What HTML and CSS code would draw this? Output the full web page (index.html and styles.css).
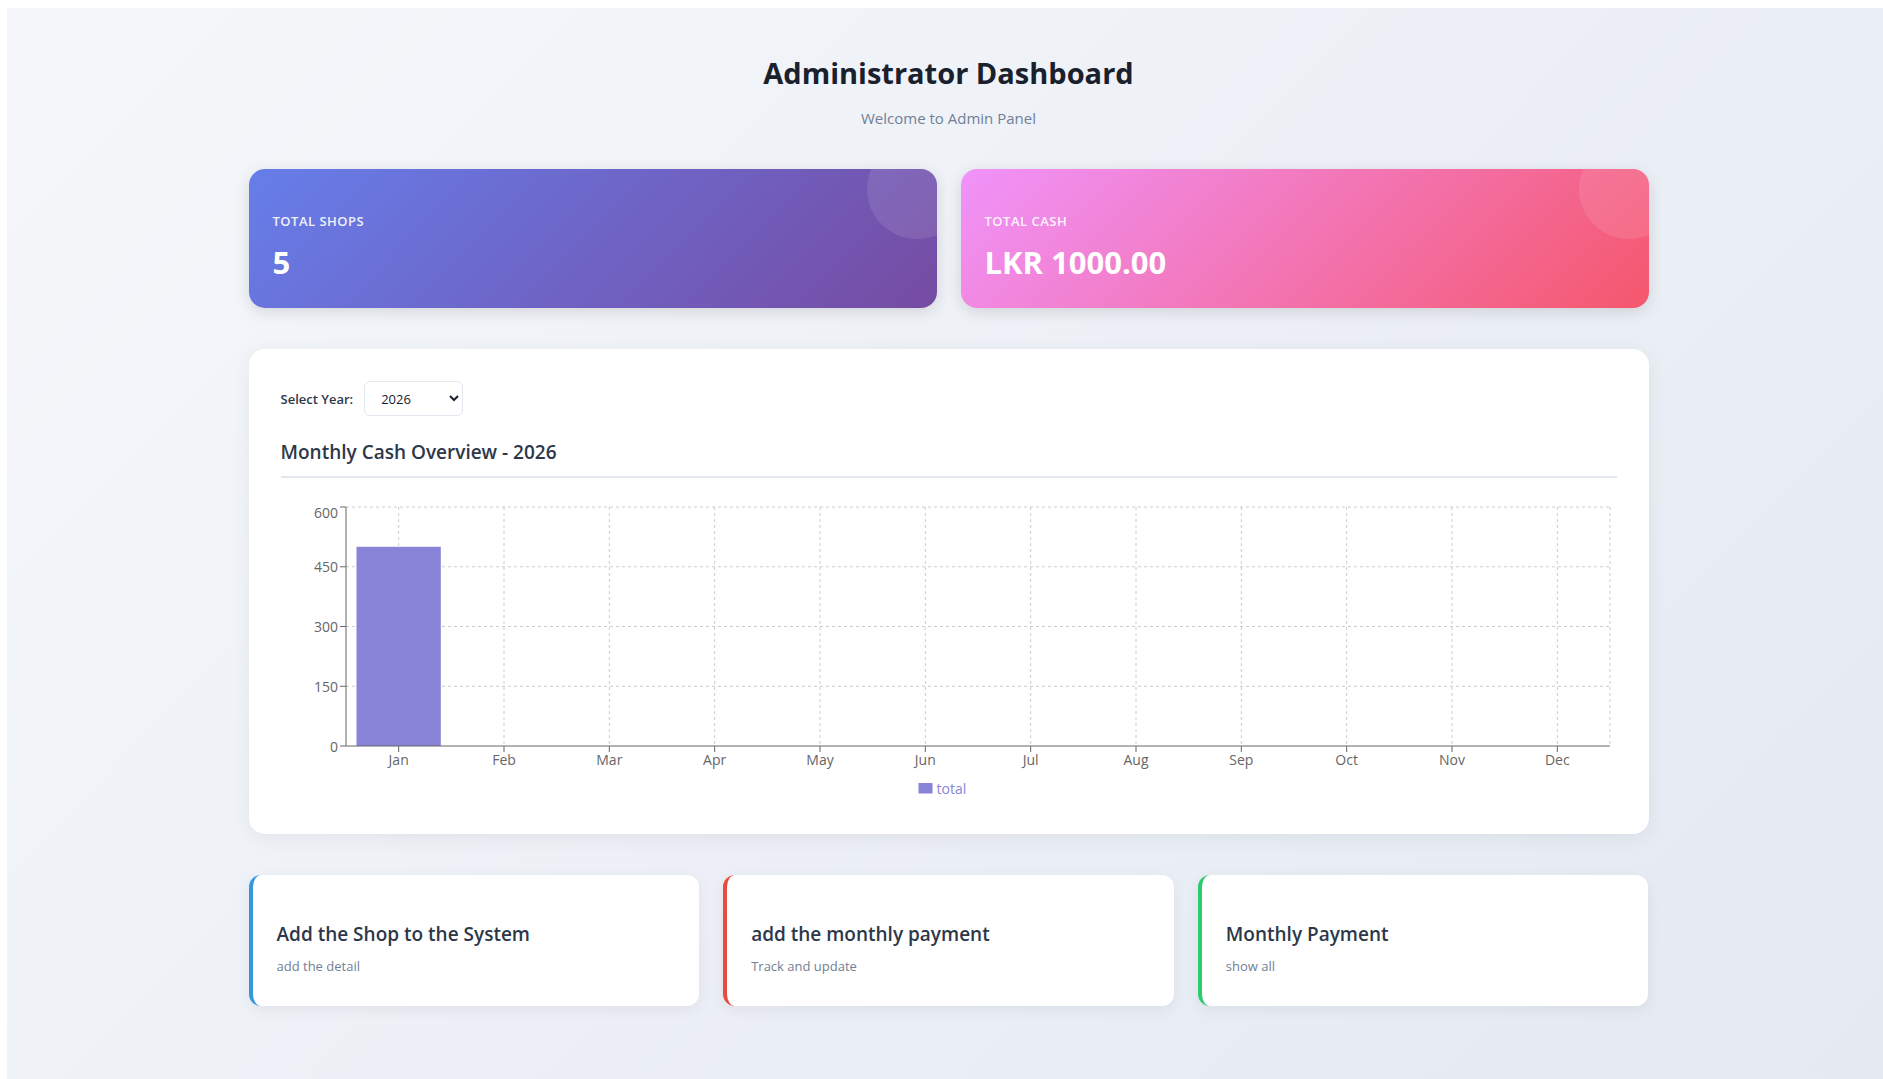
FILE: index.html
```html
<!DOCTYPE html>
<html lang="en">
<head>
  <meta charset="UTF-8">
  <meta name="viewport" content="width=device-width, initial-scale=1.0">
  <title>Administrator Dashboard</title>
  <link rel="stylesheet" href="styles.css">
</head>
<body>
  <div class="page">
    <div class="container">
      <div class="header">
        <h1>Administrator Dashboard</h1>
        <p>Welcome to Admin Panel</p>
      </div>

      <div class="stats">
        <div class="stat-card shops">
          <div class="stat-label">Total Shops</div>
          <div class="stat-value">5</div>
        </div>
        <div class="stat-card cash">
          <div class="stat-label">Total Cash</div>
          <div class="stat-value">LKR 1000.00</div>
        </div>
      </div>

      <div class="chart-card">
        <div class="year-select">
          <label for="year">Select Year:</label>
          <select id="year">
            <option>2026</option>
            <option>2025</option>
            <option>2024</option>
          </select>
        </div>
        <h2 class="chart-title">Monthly Cash Overview - 2026</h2>

        <!-- bar chart: plot area x 65..1329, y 5..244, max 600 -->
        <svg class="chart" width="1334" height="300" viewBox="0 0 1334 300">
          <g class="grid">
            <line x1="65" y1="5" x2="1329" y2="5"/>
            <line x1="65" y1="64.75" x2="1329" y2="64.75"/>
            <line x1="65" y1="124.5" x2="1329" y2="124.5"/>
            <line x1="65" y1="184.25" x2="1329" y2="184.25"/>
            <line x1="117.67" y1="5" x2="117.67" y2="244"/>
            <line x1="223" y1="5" x2="223" y2="244"/>
            <line x1="328.33" y1="5" x2="328.33" y2="244"/>
            <line x1="433.67" y1="5" x2="433.67" y2="244"/>
            <line x1="539" y1="5" x2="539" y2="244"/>
            <line x1="644.33" y1="5" x2="644.33" y2="244"/>
            <line x1="749.67" y1="5" x2="749.67" y2="244"/>
            <line x1="855" y1="5" x2="855" y2="244"/>
            <line x1="960.33" y1="5" x2="960.33" y2="244"/>
            <line x1="1065.67" y1="5" x2="1065.67" y2="244"/>
            <line x1="1171" y1="5" x2="1171" y2="244"/>
            <line x1="1276.33" y1="5" x2="1276.33" y2="244"/>
            <line x1="1329" y1="5" x2="1329" y2="244"/>
          </g>

          <rect class="bar" x="75.5" y="44.8" width="84.3" height="199.2"/>

          <g class="axis">
            <line x1="65" y1="5" x2="65" y2="244"/>
            <line x1="59" y1="5" x2="65" y2="5"/>
            <line x1="59" y1="64.75" x2="65" y2="64.75"/>
            <line x1="59" y1="124.5" x2="65" y2="124.5"/>
            <line x1="59" y1="184.25" x2="65" y2="184.25"/>
            <line x1="59" y1="244" x2="65" y2="244"/>
            <line x1="65" y1="244" x2="1329" y2="244"/>
            <line x1="117.67" y1="244" x2="117.67" y2="250"/>
            <line x1="223" y1="244" x2="223" y2="250"/>
            <line x1="328.33" y1="244" x2="328.33" y2="250"/>
            <line x1="433.67" y1="244" x2="433.67" y2="250"/>
            <line x1="539" y1="244" x2="539" y2="250"/>
            <line x1="644.33" y1="244" x2="644.33" y2="250"/>
            <line x1="749.67" y1="244" x2="749.67" y2="250"/>
            <line x1="855" y1="244" x2="855" y2="250"/>
            <line x1="960.33" y1="244" x2="960.33" y2="250"/>
            <line x1="1065.67" y1="244" x2="1065.67" y2="250"/>
            <line x1="1171" y1="244" x2="1171" y2="250"/>
            <line x1="1276.33" y1="244" x2="1276.33" y2="250"/>
          </g>

          <g class="y-labels">
            <text x="57" y="16.3">600</text>
            <text x="57" y="70.3">450</text>
            <text x="57" y="130">300</text>
            <text x="57" y="189.7">150</text>
            <text x="57" y="249.5">0</text>
          </g>
          <g class="x-labels">
            <text x="117.67" y="263">Jan</text>
            <text x="223" y="263">Feb</text>
            <text x="328.33" y="263">Mar</text>
            <text x="433.67" y="263">Apr</text>
            <text x="539" y="263">May</text>
            <text x="644.33" y="263">Jun</text>
            <text x="749.67" y="263">Jul</text>
            <text x="855" y="263">Aug</text>
            <text x="960.33" y="263">Sep</text>
            <text x="1065.67" y="263">Oct</text>
            <text x="1171" y="263">Nov</text>
            <text x="1276.33" y="263">Dec</text>
          </g>

          <g class="legend">
            <rect x="637.5" y="281" width="14" height="10.5"/>
            <text x="655.5" y="291.5">total</text>
          </g>
        </svg>
      </div>

      <div class="actions">
        <div class="action-card blue">
          <h3>Add the Shop to the System</h3>
          <p>add the detail</p>
        </div>
        <div class="action-card red">
          <h3>add the monthly payment</h3>
          <p>Track and update</p>
        </div>
        <div class="action-card green">
          <h3>Monthly Payment</h3>
          <p>show all</p>
        </div>
      </div>
    </div>
  </div>
</body>
</html>
```

FILE: styles.css
```css
* {
  box-sizing: border-box;
}
html {
  overflow: hidden;
}
body {
  margin: 8px 0 0 7px;
  font-family: "Open Sans", sans-serif;
  color: #2d3748;
}
.page {
  width: 100vw;
  min-height: 100vh;
  padding: 45px 20px 40px;
  background: linear-gradient(135deg, #f5f7fa 0%, #e4e9f2 100%);
}
.container {
  max-width: 1400px;
  margin: 0 auto;
}

/* header */
.header {
  text-align: center;
  margin-bottom: 39px;
}
.header h1 {
  margin: 0;
  font-size: 29px;
  line-height: 40px;
  font-weight: 700;
  color: #1a202c;
}
.header p {
  margin: 13px 0 0;
  font-size: 15px;
  line-height: 24px;
  color: #718096;
}

/* stat cards */
.stats {
  display: grid;
  grid-template-columns: 1fr 1fr;
  gap: 24px;
  margin-bottom: 41px;
}
.stat-card {
  position: relative;
  overflow: hidden;
  padding: 42px 24px 26px;
  border-radius: 16px;
  color: #fff;
  box-shadow: 0 4px 15px rgba(0, 0, 0, 0.12);
}
.stat-card::after {
  content: "";
  position: absolute;
  top: -30px;
  right: -30px;
  width: 100px;
  height: 100px;
  border-radius: 50%;
  background: rgba(255, 255, 255, 0.1);
}
.stat-card.shops {
  background: linear-gradient(135deg, #667eea 0%, #764ba2 100%);
}
.stat-card.cash {
  background: linear-gradient(135deg, #f093fb 0%, #f5576c 100%);
}
.stat-label {
  font-size: 13px;
  line-height: 20px;
  font-weight: 600;
  text-transform: uppercase;
  letter-spacing: 0.5px;
  opacity: 0.9;
  margin-bottom: 11px;
}
.stat-value {
  font-size: 31px;
  line-height: 40px;
  font-weight: 700;
}

/* chart card */
.chart-card {
  background: #fff;
  border-radius: 16px;
  padding: 32px;
  margin-bottom: 41px;
  box-shadow: 0 4px 20px rgba(0, 0, 0, 0.06);
}
.year-select {
  display: flex;
  align-items: center;
  gap: 11px;
}
.year-select label {
  font-size: 13px;
  font-weight: 600;
  color: #2d3748;
}
.year-select select {
  width: 99px;
  height: 35px;
  padding: 0 12px;
  border: 1px solid #e2e8f0;
  border-radius: 6px;
  background: #fff;
  font-family: inherit;
  font-size: 13px;
  color: #1a202c;
}
.chart-title {
  margin: 22px 0 24px;
  padding-bottom: 10px;
  border-bottom: 2px solid #e2e8f0;
  font-size: 19px;
  line-height: 28px;
  font-weight: 600;
  color: #2d3748;
}
.chart {
  display: block;
}
.chart text {
  font-family: "Open Sans", sans-serif;
  font-size: 14px;
  fill: #666;
}
.chart .grid line {
  stroke: #ccc;
  stroke-dasharray: 3 3;
}
.chart .axis line {
  stroke: #666;
}
.chart .y-labels text {
  text-anchor: end;
}
.chart .x-labels text {
  text-anchor: middle;
}
.chart .bar,
.chart .legend rect {
  fill: #8884d8;
}
.chart .legend text {
  fill: #8884d8;
}

/* quick action cards */
.actions {
  display: grid;
  grid-template-columns: repeat(3, 1fr);
  gap: 24px;
}
.action-card {
  background: #fff;
  border-radius: 12px;
  border-left: 4px solid #3498db;
  padding: 45px 24px 30px;
  box-shadow: 0 4px 15px rgba(0, 0, 0, 0.06);
}
.action-card.red {
  border-left-color: #e74c3c;
}
.action-card.green {
  border-left-color: #2ecc71;
}
.action-card h3 {
  margin: 0 0 8px;
  font-size: 19px;
  line-height: 28px;
  font-weight: 600;
  color: #2d3748;
}
.action-card p {
  margin: 0;
  font-size: 13px;
  line-height: 20px;
  color: #718096;
}
```
